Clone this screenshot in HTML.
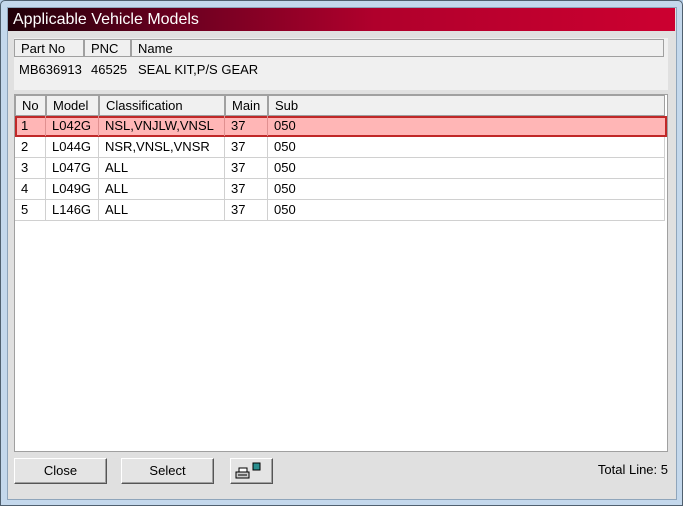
<!DOCTYPE html>
<html><head><style>
body{margin:0;width:683px;height:506px;overflow:hidden;background:#b9d1ea;font-family:"Liberation Sans",sans-serif;font-size:13px;color:#000;position:relative}
.frame{position:absolute;left:0;top:0;width:681px;height:504px;border:1px solid #50606f;border-radius:5px 5px 0 0;background:#c4d8ec}
.in{position:absolute;left:7px;top:7px;width:668px;height:491px;background:#e0e0e0;border:1px solid #8fa5bb}
.title{position:absolute;left:8px;top:8px;width:667px;height:23px;background:linear-gradient(90deg,#200008 0%,#6a0020 25%,#b0002c 55%,#cc0030 100%);color:#fff;font-size:16px;line-height:23px;padding-left:5px;box-sizing:border-box}
.abs{position:absolute}
.info{left:14px;top:38px;width:654px;height:52px;background:#f0f0f0}
.hdr{position:absolute;height:18px;background:#f0f0f0;border:1px solid #a0a0a0;box-sizing:border-box;line-height:17px;padding-left:6px}
.grid{left:14px;top:94px;width:654px;height:358px;background:#fff;border:1px solid #a0a0a0;box-sizing:border-box}
.row{position:absolute;left:0;height:21px;width:650px;border-bottom:1px solid #d0d0d0;box-sizing:border-box}
.c{position:absolute;top:0;height:20px;line-height:20px;padding-left:6px;border-right:1px solid #d0d0d0;box-sizing:border-box}
.btn{position:absolute;top:458px;height:26px;background:#e4e4e4;border:1px solid #fff;border-right-color:#555;border-bottom-color:#555;box-shadow:inset -1px -1px 0 #a0a0a0;box-sizing:border-box;text-align:center;line-height:24px;font-size:13px}
</style></head><body>
<div class="frame"></div>
<div class="in"></div>
<div class="title">Applicable Vehicle Models</div>
<div class="abs info">
 <div class="hdr" style="left:0;top:1px;width:70px">Part No</div>
 <div class="hdr" style="left:70px;top:1px;width:47px">PNC</div>
 <div class="hdr" style="left:117px;top:1px;width:533px">Name</div>
 <div class="abs" style="left:5px;top:24px">MB636913</div>
 <div class="abs" style="left:77px;top:24px">46525</div>
 <div class="abs" style="left:124px;top:24px">SEAL KIT,P/S GEAR</div>
</div>
<div class="abs grid">
 <div class="hdr" style="left:0;top:0;width:31px;height:21px;line-height:20px">No</div>
 <div class="hdr" style="left:31px;top:0;width:53px;height:21px;line-height:20px">Model</div>
 <div class="hdr" style="left:84px;top:0;width:126px;height:21px;line-height:20px">Classification</div>
 <div class="hdr" style="left:210px;top:0;width:43px;height:21px;line-height:20px">Main</div>
 <div class="hdr" style="left:253px;top:0;width:397px;height:21px;line-height:20px">Sub</div>
 <div class="row" style="top:21px;background:#ffb6b6;border:2px solid #c02828;left:0;width:652px;height:21px">
  <div class="c" style="left:-2px;width:31px;top:-2px;border-color:#e09090">1</div><div class="c" style="left:29px;width:53px;top:-2px;border-color:#e09090">L042G</div><div class="c" style="left:82px;width:126px;top:-2px;border-color:#e09090">NSL,VNJLW,VNSL</div><div class="c" style="left:208px;width:43px;top:-2px;border-color:#e09090">37</div><div class="c" style="left:251px;width:397px;top:-2px;border:0">050</div></div>
 <div class="row" style="top:42px"><div class="c" style="left:0;width:31px">2</div><div class="c" style="left:31px;width:53px">L044G</div><div class="c" style="left:84px;width:126px">NSR,VNSL,VNSR</div><div class="c" style="left:210px;width:43px">37</div><div class="c" style="left:253px;width:397px">050</div></div>
 <div class="row" style="top:63px"><div class="c" style="left:0;width:31px">3</div><div class="c" style="left:31px;width:53px">L047G</div><div class="c" style="left:84px;width:126px">ALL</div><div class="c" style="left:210px;width:43px">37</div><div class="c" style="left:253px;width:397px">050</div></div>
 <div class="row" style="top:84px"><div class="c" style="left:0;width:31px">4</div><div class="c" style="left:31px;width:53px">L049G</div><div class="c" style="left:84px;width:126px">ALL</div><div class="c" style="left:210px;width:43px">37</div><div class="c" style="left:253px;width:397px">050</div></div>
 <div class="row" style="top:105px"><div class="c" style="left:0;width:31px">5</div><div class="c" style="left:31px;width:53px">L146G</div><div class="c" style="left:84px;width:126px">ALL</div><div class="c" style="left:210px;width:43px">37</div><div class="c" style="left:253px;width:397px">050</div></div>
</div>
<div class="btn" style="left:14px;width:93px">Close</div>
<div class="btn" style="left:121px;width:93px">Select</div>
<div class="btn" style="left:230px;width:43px">
 <svg width="40" height="24" viewBox="0 0 40 24" style="position:absolute;left:0;top:0">
  <rect x="8" y="9" width="8" height="5" fill="#fff" stroke="#000"/>
  <rect x="5" y="13" width="13" height="6" fill="#ccc" stroke="#000"/>
  <line x1="7" y1="16" x2="16" y2="16" stroke="#000"/>
  <rect x="22" y="4" width="7" height="7" fill="#2a8f8f" stroke="#000"/>
 </svg>
</div>
<div class="abs" style="right:15px;top:462px">Total Line: 5</div>
</body></html>
